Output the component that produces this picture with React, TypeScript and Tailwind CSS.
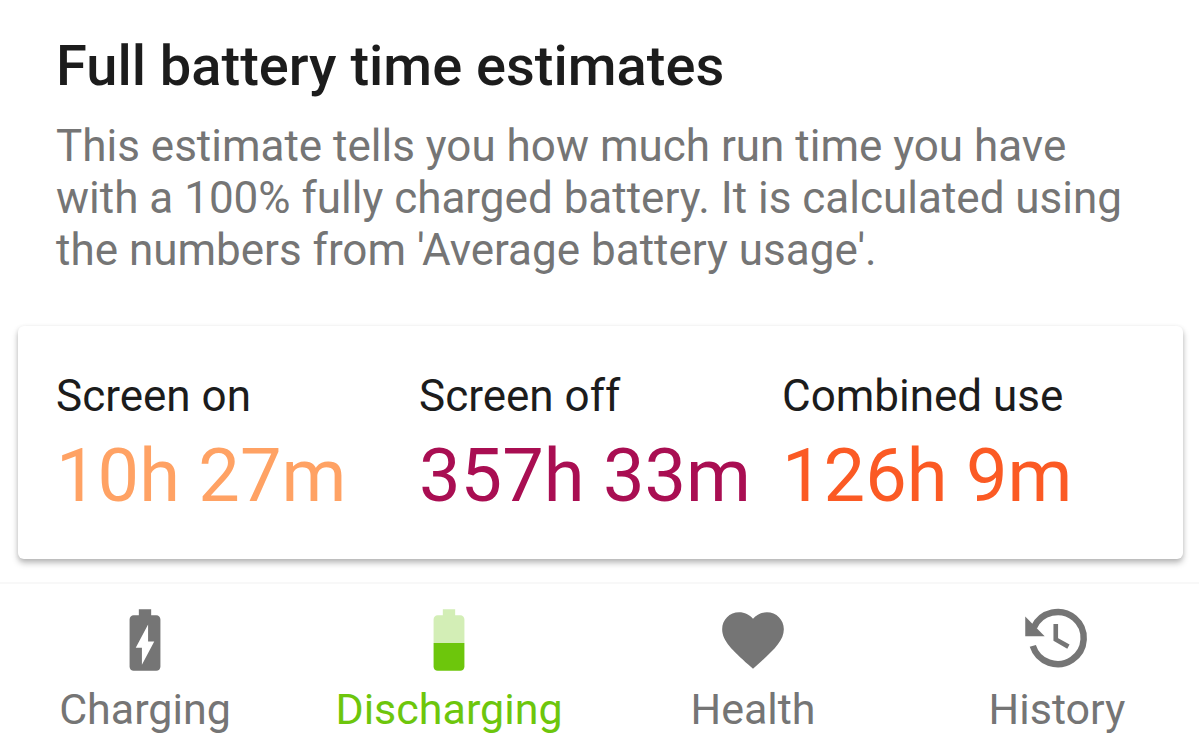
import React from "react";

const estimates = [
  { label: "Screen on", value: "10h 27m", color: "text-[#ffa264]" },
  { label: "Screen off", value: "357h 33m", color: "text-[#a90e52]" },
  { label: "Combined use", value: "126h 9m", color: "text-[#fb5a24]" },
];

function ChargingIcon() {
  return (
    <svg viewBox="0 0 24 24" className="size-[74px]" fill="currentColor" aria-hidden="true">
      <path d="M15.67 4H14V2h-4v2H8.33C7.6 4 7 4.6 7 5.33v15.33C7 21.4 7.6 22 8.33 22h7.33c.74 0 1.34-.6 1.34-1.33V5.33C17 4.6 16.4 4 15.67 4zM11 20v-5.5H9L13 7v5.5h2L11 20z" />
    </svg>
  );
}

function DischargingIcon() {
  return (
    <svg viewBox="0 0 24 24" className="size-[74px]" fill="currentColor" aria-hidden="true">
      <path
        fillOpacity=".3"
        d="M17 5.33C17 4.6 16.4 4 15.67 4H14V2h-4v2H8.33C7.6 4 7 4.6 7 5.33V13h10V5.33z"
      />
      <path d="M7 13v7.67C7 21.4 7.6 22 8.33 22h7.33c.74 0 1.34-.6 1.34-1.33V13H7z" />
    </svg>
  );
}

function HealthIcon() {
  return (
    <svg viewBox="0 0 24 24" className="size-[74px]" fill="currentColor" aria-hidden="true">
      <path d="M12 21.35l-1.45-1.32C5.4 15.36 2 12.28 2 8.5 2 5.42 4.42 3 7.5 3c1.74 0 3.41.81 4.5 2.09C13.09 3.81 14.76 3 16.5 3 19.58 3 22 5.42 22 8.5c0 3.78-3.4 6.86-8.55 11.54L12 21.35z" />
    </svg>
  );
}

function HistoryIcon() {
  return (
    <svg viewBox="0 0 24 24" className="size-[74px]" fill="none" stroke="currentColor" aria-hidden="true">
      <path d="M4.5 7.9A8.45 8.45 0 1 1 4.15 13.9" strokeWidth="2.1" />
      <path d="M11.6 6.8v5l4.1 2.35" strokeWidth="1.5" />
      <path d="M1.7 4.4v6.4H8z" fill="currentColor" stroke="none" />
    </svg>
  );
}

const tabs = [
  { label: "Charging", icon: <ChargingIcon />, active: false },
  { label: "Discharging", icon: <DischargingIcon />, active: true },
  { label: "Health", icon: <HealthIcon />, active: false },
  { label: "History", icon: <HistoryIcon />, active: false },
];

function App() {
  return (
    <div className="min-h-screen flex flex-col bg-white font-['Roboto',sans-serif]">
      <main className="pl-[18px] pr-4 pt-8 pb-[23px]">
        <header className="px-[38px]">
          <h1 className="text-[56px] leading-[68px] font-medium text-[#1c1c1c]">
            Full battery time estimates
          </h1>
          <p className="mt-5 max-w-[1080px] text-[44px] leading-[52px] text-[#757575]">
            This estimate tells you how much run time you have with a 100% fully
            charged battery. It is calculated using the numbers from 'Average
            battery usage'.
          </p>
        </header>

        <section className="mt-[50px] px-[38px] pt-11 pb-[39px] grid grid-cols-3 rounded-md bg-white shadow-[0_4px_6px_rgba(0,0,0,0.26),0_1px_4px_rgba(0,0,0,0.08)]">
          {estimates.map(({ label, value, color }) => (
            <div key={label} className="whitespace-nowrap">
              <h2 className="text-[44px] leading-[52px] text-[#1c1c1c]">{label}</h2>
              <p className={`mt-[10px] text-[74px] leading-[88px] ${color}`}>{value}</p>
            </div>
          ))}
        </section>
      </main>

      <nav className="flex justify-between border-t-2 border-[#f8f8f8] pl-[31px] pr-7 pt-[19px] pb-3">
        {tabs.map(({ label, icon, active }) => (
          <button
            key={label}
            type="button"
            aria-current={active ? "page" : undefined}
            className={`flex w-[228px] flex-col items-center text-[43px] leading-[52px] ${
              active ? "text-[#6dc60c]" : "text-[#757575]"
            }`}
          >
            {icon}
            <span className="mt-1.5">{label}</span>
          </button>
        ))}
      </nav>
    </div>
  );
}

export default App;
